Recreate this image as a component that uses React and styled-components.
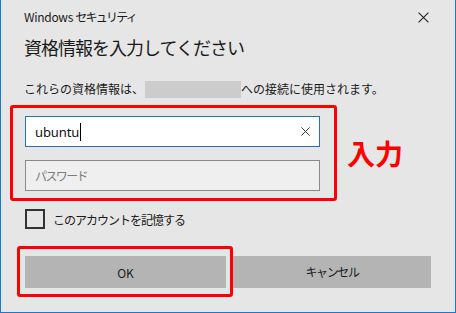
import styled, { createGlobalStyle } from "styled-components";

const Global = createGlobalStyle`
  body {
    margin: 0;
    background: #e6e6e6;
  }
`;

const font = `"Noto Sans CJK JP", "Noto Sans", sans-serif`;

const Window = styled.div`
  box-sizing: border-box;
  width: 456px;
  height: 313px;
  background: #e6e6e6;
  border: 1px solid #1979ca;
  border-top: none;
  padding: 0 23px;
  font-family: ${font};
  color: #1a1a1a;
  overflow: hidden;
`;

const TitleBar = styled.div`
  display: flex;
  justify-content: space-between;
  align-items: center;
  height: 26px;
  padding-top: 8px;
  box-sizing: border-box;
`;

const Caption = styled.span`
  font-size: 12px;
  line-height: 18px;
  letter-spacing: -0.3px;
`;

const Kana = styled.span`
  letter-spacing: -1.8px;
`;

const CloseButton = styled.div`
  width: 11px;
  height: 11px;
  margin-right: 3px;
  display: flex;
`;

const Heading = styled.h1`
  margin: 9px 0 0;
  font-size: 18px;
  font-weight: normal;
  line-height: 24px;
  letter-spacing: -1px;
`;

const Message = styled.p`
  margin: 21px 0 0;
  font-size: 12px;
  line-height: 18px;
  display: flex;
  align-items: center;
  letter-spacing: 0;
`;

const Redacted = styled.span`
  display: inline-block;
  width: 96px;
  height: 17px;
  background: #cccccc;
  margin: 0 0 0 1px;
`;

const FieldRow = styled.div`
  display: flex;
  align-items: center;
  margin-top: 7px;
`;

const Highlight = styled.div`
  border: 3px solid #ff0000;
  border-radius: 3px;
  padding: ${(p) => p.$pad};
  margin-left: ${(p) => p.$shift};
  display: flex;
  flex-direction: ${(p) => (p.$column ? "column" : "row")};
  gap: 13px;
`;

const Field = styled.div`
  box-sizing: border-box;
  width: 295px;
  height: 31px;
  display: flex;
  align-items: center;
  padding: 0 9px;
  background: ${(p) => (p.$active ? "#ffffff" : "#efefef")};
  border: 1px solid ${(p) => (p.$active ? "#2b6fb3" : "#8a8a8a")};
`;

const FieldText = styled.span`
  font-family: "Noto Sans", sans-serif;
  font-size: 13px;
  color: #111;
  letter-spacing: -0.1px;
`;

const Caret = styled.span`
  display: inline-block;
  width: 1px;
  height: 18px;
  background: #000;
  margin-left: 1px;
`;

const Placeholder = styled.span`
  font-size: 12px;
  color: #7d7d7d;
  letter-spacing: -1.6px;
`;

const ClearIcon = styled.div`
  margin-left: auto;
  display: flex;
`;

const Annotation = styled.span`
  margin-left: 10px;
  color: #ff0000;
  font-size: 28px;
  font-weight: bold;
  line-height: 30px;
`;

const CheckRow = styled.label`
  display: flex;
  align-items: center;
  gap: 8px;
  margin: 8px 0 0 1px;
  height: 20px;
  font-size: 12px;
  letter-spacing: -1px;
`;

const Box = styled.span`
  box-sizing: border-box;
  width: 20px;
  height: 20px;
  border: 2px solid #333333;
`;

const ButtonRow = styled.div`
  display: flex;
  align-items: center;
  margin-top: 17px;
`;

const Button = styled.div`
  width: ${(p) => p.$w}px;
  height: 32px;
  background: #b4b4b4;
  display: flex;
  align-items: center;
  justify-content: center;
  font-size: 12px;
  letter-spacing: ${(p) => (p.$tight ? "-1.4px" : "0")};
  color: #1a1a1a;
`;

const X = ({ size }) => (
  <svg width={size} height={size} viewBox="0 0 10 10">
    <path d="M0.5 0.5 L9.5 9.5 M9.5 0.5 L0.5 9.5" stroke="#222" strokeWidth="1" fill="none" />
  </svg>
);

export default function App() {
  return (
    <>
      <Global />
      <Window>
        <TitleBar>
          <Caption>
            Windows <Kana>セキュリティ</Kana>
          </Caption>
          <CloseButton>
            <X size={11} />
          </CloseButton>
        </TitleBar>
        <Heading>資格情報を入力してください</Heading>
        <Message>
          これらの資格情報は、<Redacted />への接続に使用されます。
        </Message>
        <FieldRow>
          <Highlight $column $pad="8px 14px 7px 12px" $shift="-14px">
            <Field $active>
              <FieldText>ubuntu</FieldText>
              <Caret />
              <ClearIcon>
                <X size={9} />
              </ClearIcon>
            </Field>
            <Field>
              <Placeholder>パスワード</Placeholder>
            </Field>
          </Highlight>
          <Annotation>入力</Annotation>
        </FieldRow>
        <CheckRow>
          <Box />
          このアカウントを記憶する
        </CheckRow>
        <ButtonRow>
          <Highlight $pad="7px 4px 6px 5px" $shift="-7px">
            <Button $w={201}>OK</Button>
          </Highlight>
          <Button $w={198} $tight>
            キャンセル
          </Button>
        </ButtonRow>
      </Window>
    </>
  );
}
